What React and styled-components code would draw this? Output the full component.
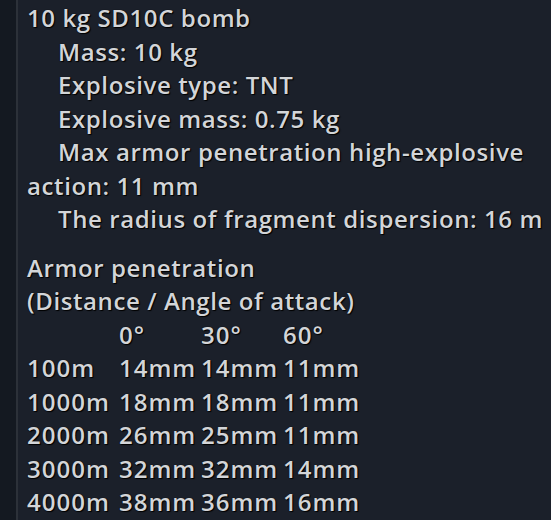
import React from "react";
import styled, { createGlobalStyle } from "styled-components";

const GlobalStyle = createGlobalStyle`
  html, body {
    margin: 0;
    padding: 0;
    background: #1b202a;
  }
  body {
    font-family: "Open Sans", "Noto Sans", sans-serif;
  }
`;

const specs = [
  { text: "Mass: 10 kg", indent: true },
  { text: "Explosive type: TNT", indent: true },
  { text: "Explosive mass: 0.75 kg", indent: true },
  { text: "Max armor penetration high-explosive action: 11 mm", indent: true },
  { text: "The radius of fragment dispersion: 16 m", indent: true },
];

const angles = ["", "0°", "30°", "60°"];

const penetration = [
  ["100m", "14mm", "14mm", "11mm"],
  ["1000m", "18mm", "18mm", "11mm"],
  ["2000m", "26mm", "25mm", "11mm"],
  ["3000m", "32mm", "32mm", "14mm"],
  ["4000m", "38mm", "36mm", "16mm"],
];

const Page = styled.div`
  display: flex;
  min-height: 520px;
  background: #1b202a;
`;

const Rail = styled.div`
  width: 16px;
  flex-shrink: 0;
  background: #141921;
  border-right: 2px solid #2c3139;
`;

const Content = styled.div`
  flex: 1;
  padding: 1px 0 0 9px;
  color: #d3d5d8;
  font-size: 24px;
  font-weight: 600;
  letter-spacing: 0.6px;
  line-height: 33.5px;
  text-shadow: 0 0 1px #000, 1px 1px 1px #000;
`;

const Section = styled.div`
  margin-bottom: ${(p) => (p.$gap ? "15px" : "0")};
`;

const Line = styled.div`
  text-indent: ${(p) => (p.$indent ? "31px" : "0")};
  white-space: normal;
`;

const Table = styled.div`
  display: grid;
  grid-template-columns: 92px 82px 82px 82px;
  letter-spacing: 1px;
`;

const Cell = styled.span`
  white-space: nowrap;
`;

export default function App() {
  return (
    <>
      <GlobalStyle />
      <Page>
        <Rail />
        <Content>
          <Section $gap>
            <Line>10 kg SD10C bomb</Line>
            {specs.map((s) => (
              <Line key={s.text} $indent={s.indent}>
                {s.text}
              </Line>
            ))}
          </Section>
          <Section>
            <Line>Armor penetration</Line>
            <Line>(Distance / Angle of attack)</Line>
            <Table>
              {angles.map((a, i) => (
                <Cell key={"h" + i}>{a}</Cell>
              ))}
              {penetration.map((row) =>
                row.map((v, i) => <Cell key={row[0] + i}>{v}</Cell>)
              )}
            </Table>
          </Section>
        </Content>
      </Page>
    </>
  );
}
